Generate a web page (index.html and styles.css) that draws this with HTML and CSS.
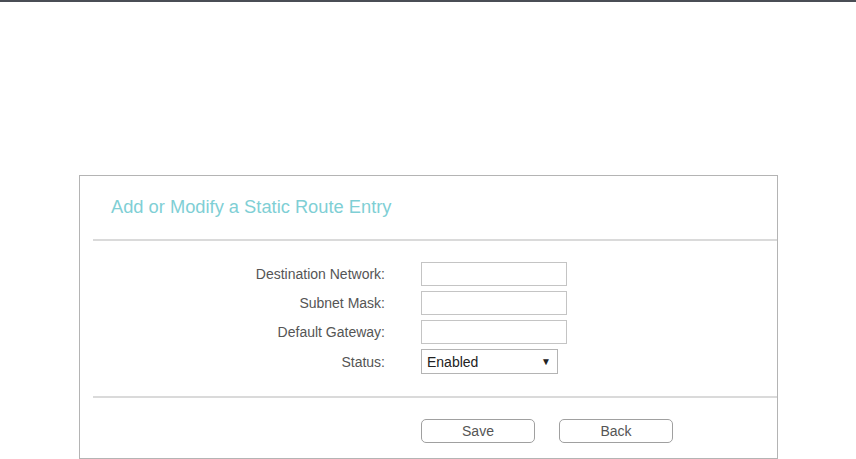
FILE: index.html
```html
<!DOCTYPE html>
<html lang="en">
<head>
    <meta charset="UTF-8">
    <meta name="viewport" content="width=device-width, initial-scale=1.0"/>
    <title>Static Routing</title>
    <link rel="stylesheet" href="styles.css">
</head>
<body>
    <!--top bar-->
    <div class="topLine"></div>

    <!--route entry panel-->
    <div class="panel">
        <div class="panelHead">
            <h2>Add or Modify a Static Route Entry</h2>
        </div>

        <form id="routeForm" onsubmit="return false;">
            <div class="row">
                <label for="dest">Destination Network:</label>
                <input type="text" name="dest" id="dest"/>
            </div>
            <div class="row">
                <label for="mask">Subnet Mask:</label>
                <input type="text" name="mask" id="mask"/>
            </div>
            <div class="row">
                <label for="gateway">Default Gateway:</label>
                <input type="text" name="gateway" id="gateway"/>
            </div>
            <div class="row">
                <label for="status">Status:</label>
                <div class="select">
                    <span>Enabled</span>
                    <span class="arrow">&#9660;</span>
                </div>
            </div>
        </form>

        <div class="buttons">
            <button type="button">Save</button>
            <button type="button">Back</button>
        </div>
    </div>
</body>
</html>
```

FILE: styles.css
```css
* {
  font-family: "Liberation Sans", Arial, sans-serif;
  box-sizing: border-box;
}
body {
  margin: 0;
  background: #fff;
}
.topLine {
  height: 2px;
  background: #4a4e55;
}
.panel {
  margin: 173px 0 0 79px;
  width: 699px;
  height: 284px;
  border: 1px solid #b4b4b4;
}
.panelHead {
  height: 65px;
  margin-left: 13px;
  border-bottom: 2px solid #dadada;
  padding: 20px 0 0 18px;
}
.panelHead h2 {
  margin: 0;
  font-size: 18.3px;
  font-weight: normal;
  color: #7fcfd5;
  line-height: 22px;
}
#routeForm {
  margin-left: 13px;
  padding: 21px 0 22px;
  border-bottom: 2px solid #dadada;
  display: flex;
  flex-direction: column;
  gap: 5px;
}
.row {
  display: flex;
  align-items: center;
  gap: 36px;
}
.row label {
  width: 292px;
  text-align: right;
  font-size: 14px;
  color: #555;
}
.row input {
  width: 146px;
  height: 24px;
  border: 1px solid #c4c4c4;
  padding: 0 5px;
}
.select {
  width: 137px;
  height: 25px;
  border: 1px solid #b4b4b4;
  display: flex;
  align-items: center;
  justify-content: space-between;
  padding: 0 6px 0 5px;
  font-size: 14px;
  color: #222;
}
.select .arrow {
  font-size: 10px;
  color: #222;
}
.buttons {
  display: flex;
  gap: 24px;
  padding: 21px 0 0 341px;
}
.buttons button {
  width: 114px;
  height: 24px;
  border: 1px solid #a0a0a0;
  border-radius: 5px;
  background: #fff;
  font-size: 14px;
  color: #555;
  cursor: pointer;
}
```
